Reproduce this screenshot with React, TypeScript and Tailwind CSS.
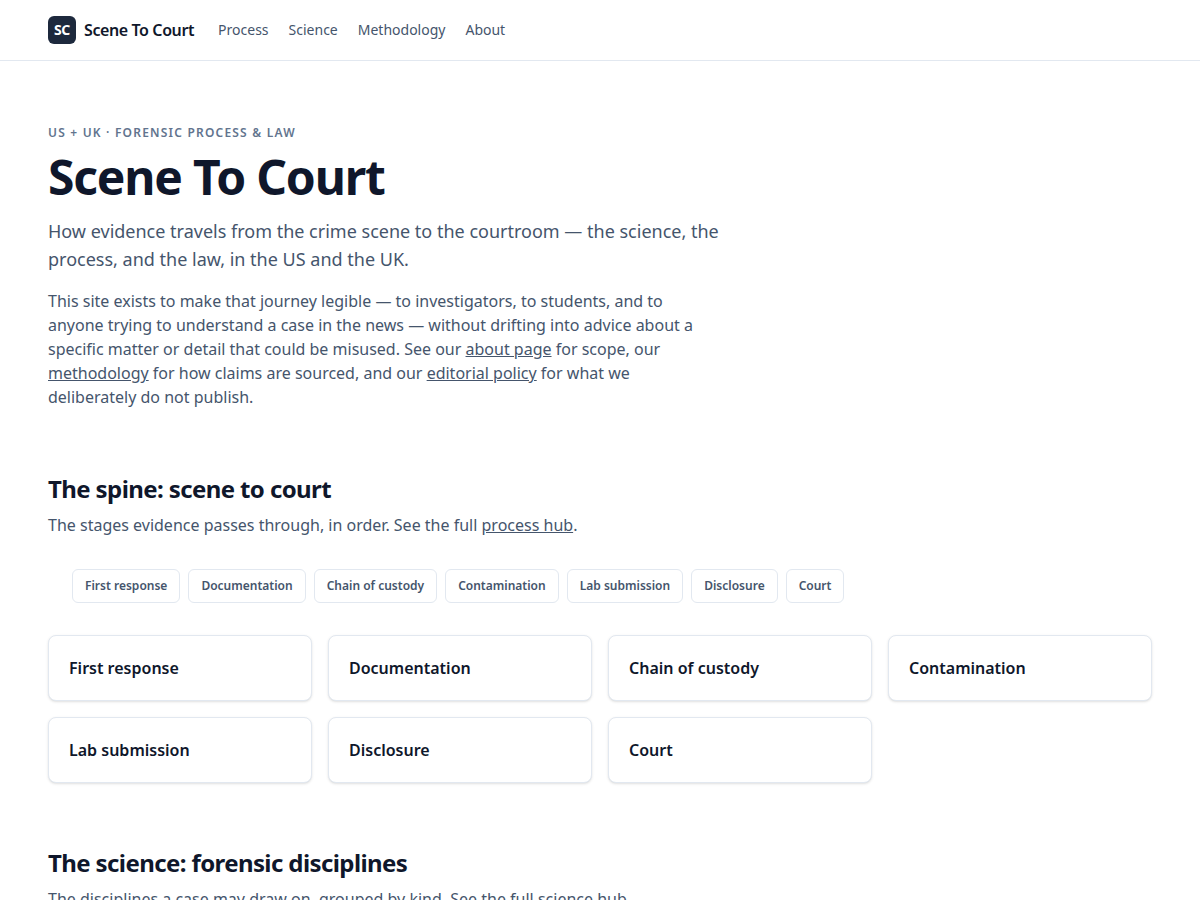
import type { ReactNode } from "react";

const NAV = ["Process", "Science", "Methodology", "About"];

const STAGES = [
  { slug: "first-response", title: "First response" },
  { slug: "documentation", title: "Documentation" },
  { slug: "chain-of-custody", title: "Chain of custody" },
  { slug: "contamination", title: "Contamination" },
  { slug: "lab-submission", title: "Lab submission" },
  { slug: "disclosure", title: "Disclosure" },
  { slug: "court", title: "Court" },
];

function TextLink({ href, children }: { href: string; children: ReactNode }) {
  return (
    <a href={href} className="underline hover:text-slate-900">
      {children}
    </a>
  );
}

function SectionHeading({ title, children }: { title: string; children: ReactNode }) {
  return (
    <div>
      <h2 className="text-2xl font-bold tracking-tight text-slate-900">{title}</h2>
      <p className="mt-2 max-w-2xl text-slate-600">{children}</p>
    </div>
  );
}

function Header() {
  return (
    <header className="border-b border-slate-200 bg-white">
      <div className="mx-auto flex max-w-6xl items-center gap-6 px-6 py-4">
        <a href="/" className="flex items-center gap-2 font-semibold tracking-tight text-slate-900">
          <span className="flex size-7 items-center justify-center rounded-md bg-slate-800 text-sm font-bold text-white">
            SC
          </span>
          Scene To Court
        </a>
        <nav className="flex gap-5 text-sm text-slate-600">
          {NAV.map((item) => (
            <a key={item} href={`/${item.toLowerCase()}`} className="hover:text-slate-900">
              {item}
            </a>
          ))}
        </nav>
      </div>
    </header>
  );
}

export default function App() {
  return (
    <div className="min-h-screen bg-white font-['Noto_Sans',sans-serif] text-slate-900">
      <Header />
      <main className="mx-auto max-w-6xl px-6 py-16">
        <section className="max-w-2xl">
          <p className="text-xs font-semibold uppercase tracking-widest text-slate-500">
            US + UK · Forensic process &amp; law
          </p>
          <h1 className="mt-3 text-5xl font-bold tracking-tight text-slate-900">Scene To Court</h1>
          <p className="mt-4 text-lg text-slate-600">
            How evidence travels from the crime scene to the courtroom — the science, the process,
            and the law, in the US and the UK.
          </p>
          <p className="mt-4 text-slate-600">
            This site exists to make that journey legible — to investigators, to students, and to
            anyone trying to understand a case in the news — without drifting into advice about a
            specific matter or detail that could be misused. See our{" "}
            <TextLink href="/about">about page</TextLink> for scope, our{" "}
            <TextLink href="/methodology">methodology</TextLink> for how claims are sourced, and our{" "}
            <TextLink href="/editorial-policy">editorial policy</TextLink> for what we deliberately
            do not publish.
          </p>
        </section>

        <section className="mt-16">
          <SectionHeading title="The spine: scene to court">
            The stages evidence passes through, in order. See the full{" "}
            <TextLink href="/process">process hub</TextLink>.
          </SectionHeading>
          <ol className="mt-8 flex flex-wrap gap-2 px-6">
            {STAGES.map((stage) => (
              <li key={stage.slug}>
                <a
                  href={`#${stage.slug}`}
                  className="block rounded-md border border-slate-200 px-3 py-2 text-xs font-semibold text-slate-600"
                >
                  {stage.title}
                </a>
              </li>
            ))}
          </ol>
          <div className="mt-8 grid grid-cols-1 gap-4 sm:grid-cols-2 lg:grid-cols-4">
            {STAGES.map((stage) => (
              <a
                key={stage.slug}
                href={`/process/${stage.slug}`}
                className="rounded-lg border border-slate-200 bg-white p-5 shadow-sm hover:border-slate-300"
              >
                <h3 className="font-semibold text-slate-900">{stage.title}</h3>
              </a>
            ))}
          </div>
        </section>

        <section className="mt-16">
          <SectionHeading title="The science: forensic disciplines">
            The disciplines a case may draw on, grouped by kind. See the full{" "}
            <TextLink href="/science">science hub</TextLink>.
          </SectionHeading>
        </section>
      </main>
    </div>
  );
}
